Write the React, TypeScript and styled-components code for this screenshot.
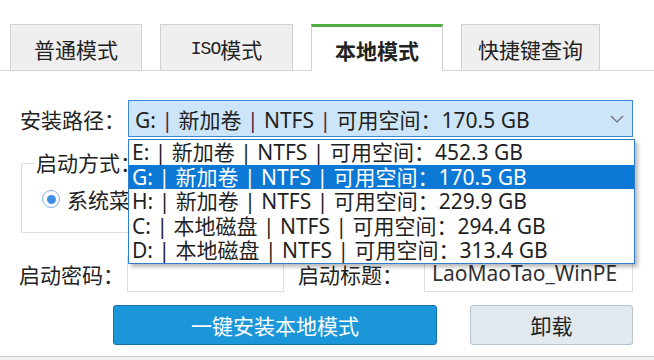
import React from "react";
import styled, { createGlobalStyle } from "styled-components";

const GlobalStyle = createGlobalStyle`
    html, body {
        margin: 0;
        padding: 0;
        background: #ffffff;
    }
    body {
        font-family: "Noto Sans", "Noto Sans CJK SC", sans-serif;
        color: #1f1f1f;
    }
`;

type Drive = { letter: string; label: string; free: string };

const drives: Drive[] = [
    { letter: "E", label: "新加卷", free: "452.3 GB" },
    { letter: "G", label: "新加卷", free: "170.5 GB" },
    { letter: "H", label: "新加卷", free: "229.9 GB" },
    { letter: "C", label: "本地磁盘", free: "294.4 GB" },
    { letter: "D", label: "本地磁盘", free: "313.4 GB" },
];

const selected = "G";

const DriveText = ({ drive }: { drive: Drive }) => (
    <>
        {drive.letter}: <Sep>|</Sep> {drive.label} <Sep>|</Sep> NTFS <Sep>|</Sep> 可用空间：{drive.free}
    </>
);

export default function App() {
    const current = drives.find(d => d.letter === selected)!;

    return (
        <Window>
            <GlobalStyle />
            <TabBar>
                <Tab $width={132}>普通模式</Tab>
                <Tab $width={133}>
                    <Mono>ISO</Mono>模式
                </Tab>
                <Tab $width={132} $active>
                    本地模式
                </Tab>
                <Tab $width={139}>快捷键查询</Tab>
            </TabBar>

            <PathRow>
                <Label>安装路径：</Label>
                <ComboWrap>
                    <Combo>
                        <ComboText>
                            <DriveText drive={current} />
                        </ComboText>
                        <svg width="14" height="8" viewBox="0 0 14 8">
                            <polyline points="1,1 7,7 13,1" fill="none" stroke="#6b6b6b" strokeWidth="1.2" />
                        </svg>
                    </Combo>
                    <DropList>
                        {drives.map(d => (
                            <DropItem key={d.letter} $selected={d.letter === selected}>
                                <DriveText drive={d} />
                            </DropItem>
                        ))}
                    </DropList>
                </ComboWrap>
            </PathRow>

            <BootGroup>
                <Legend>启动方式：</Legend>
                <RadioRow>
                    <Radio $checked />
                    <RadioLabel>系统菜单启动</RadioLabel>
                    <Radio />
                    <RadioLabel>按键启动</RadioLabel>
                </RadioRow>
            </BootGroup>

            <FieldRow>
                <Label>启动密码：</Label>
                <TextBox $width={157} />
                <RightLabel>启动标题：</RightLabel>
                <TextBox $width={209}>LaoMaoTao_WinPE</TextBox>
            </FieldRow>

            <ButtonRow>
                <PrimaryButton>一键安装本地模式</PrimaryButton>
                <SecondaryButton>卸载</SecondaryButton>
            </ButtonRow>

            <Footer />
        </Window>
    );
}

const Window = styled.div`
    width: 654px;
    height: 360px;
    overflow: hidden;
    display: flex;
    flex-direction: column;
    font-size: 21px;
    background: #ffffff;

    & > * {
        flex-shrink: 0;
    }
`;

const TabBar = styled.div`
    display: flex;
    align-items: flex-end;
    gap: 18px;
    padding: 24px 0 0 10px;
    height: 71px;
    box-sizing: border-box;
    border-bottom: 1px solid #d6d6d6;
`;

const Tab = styled.div<{ $width: number; $active?: boolean }>`
    width: ${p => p.$width}px;
    height: ${p => (p.$active ? 47 : 46)}px;
    box-sizing: border-box;
    display: flex;
    align-items: center;
    justify-content: center;
    border: 1px solid #d2d2d2;
    border-bottom: none;
    border-top: ${p => (p.$active ? "3px solid #4fae3f" : "1px solid #d2d2d2")};
    background: ${p => (p.$active ? "#ffffff" : "#efefef")};
    font-weight: ${p => (p.$active ? 700 : 400)};
    margin-bottom: ${p => (p.$active ? "-1px" : "0")};
    color: #222;
    padding-top: 2px;
`;

const Mono = styled.span`
    font-family: "Liberation Mono", monospace;
    font-size: 18px;
    letter-spacing: -1px;
`;

const PathRow = styled.div`
    display: flex;
    align-items: center;
    margin-top: 29px;
    padding-left: 20px;
    height: 37px;
`;

const Label = styled.div`
    width: 108px;
    white-space: nowrap;
    color: #222;
`;

const ComboWrap = styled.div`
    position: relative;
    z-index: 2;
`;

const Combo = styled.div`
    width: 505px;
    height: 37px;
    box-sizing: border-box;
    border: 1px solid #3a86d0;
    background: #cde5f8;
    display: flex;
    align-items: center;
    justify-content: space-between;
    padding: 0 8px 0 6px;
`;

const ComboText = styled.div`
    white-space: nowrap;
    color: #1f1f1f;
`;

const DropList = styled.div`
    position: absolute;
    top: 39px;
    left: 0;
    width: 507px;
    box-sizing: border-box;
    border: 1px solid #2c7fd0;
    background: #ffffff;
    box-shadow: 3px 3px 4px rgba(0, 0, 0, 0.28);
`;

const DropItem = styled.div<{ $selected?: boolean }>`
    height: 24.6px;
    line-height: 24px;
    padding-left: 3px;
    white-space: nowrap;
    background: ${p => (p.$selected ? "#0a78d4" : "transparent")};
    color: ${p => (p.$selected ? "#ffffff" : "#1f1f1f")};
`;

const Sep = styled.span`
    color: #5a2446;
    ${DropItem} & {
        color: inherit;
    }
`;

const BootGroup = styled.fieldset`
    margin: 14px 21px 0 21px;
    width: 612px;
    height: 82px;
    box-sizing: border-box;
    border: 1px solid #dcdcdc;
    padding: 12px 0 0 20px;
    min-width: 0;
`;

const Legend = styled.legend`
    padding: 0 1px;
    margin-left: -7px;
    line-height: 24px;
    color: #222;
`;

const RadioRow = styled.div`
    display: flex;
    align-items: center;
    height: 24px;
`;

const Radio = styled.span<{ $checked?: boolean }>`
    width: 18px;
    height: 18px;
    box-sizing: border-box;
    border-radius: 50%;
    border: 1.5px solid ${p => (p.$checked ? "#7fb2e5" : "#9a9a9a")};
    background: #fff;
    display: inline-flex;
    align-items: center;
    justify-content: center;
    margin-right: 7px;
    &::after {
        content: "";
        width: 9px;
        height: 9px;
        border-radius: 50%;
        background: ${p => (p.$checked ? "#3d8ee4" : "transparent")};
    }
`;

const RadioLabel = styled.span`
    margin-right: 40px;
    white-space: nowrap;
    color: #222;
`;

const FieldRow = styled.div`
    display: flex;
    align-items: center;
    margin-top: 23px;
    padding-left: 19px;
    height: 36px;
`;

const RightLabel = styled.div`
    width: 140px;
    text-align: right;
    padding-right: 21px;
    box-sizing: border-box;
    white-space: nowrap;
    color: #222;
`;

const TextBox = styled.div<{ $width: number }>`
    width: ${p => p.$width}px;
    height: 36px;
    box-sizing: border-box;
    border: 1px solid #dedede;
    background: #fff;
    padding-left: 7px;
    line-height: 33px;
    color: #333;
    white-space: nowrap;
    overflow: hidden;
`;

const ButtonRow = styled.div`
    display: flex;
    margin-top: 13px;
    padding-left: 113px;
    gap: 33px;
    height: 40px;
`;

const PrimaryButton = styled.div`
    width: 324px;
    box-sizing: border-box;
    border: 1px solid #1670ad;
    border-radius: 3px;
    background: #1b97d9;
    color: #ffffff;
    display: flex;
    align-items: center;
    justify-content: center;
`;

const SecondaryButton = styled.div`
    width: 163px;
    box-sizing: border-box;
    border: 1px solid #b7c3ce;
    border-radius: 3px;
    background: #e1e8ee;
    color: #222;
    display: flex;
    align-items: center;
    justify-content: center;
`;

const Footer = styled.div`
    margin-top: 11px;
    flex: 1;
    border-top: 1px solid #cfcfcf;
    background: #f2f2f2;
`;
